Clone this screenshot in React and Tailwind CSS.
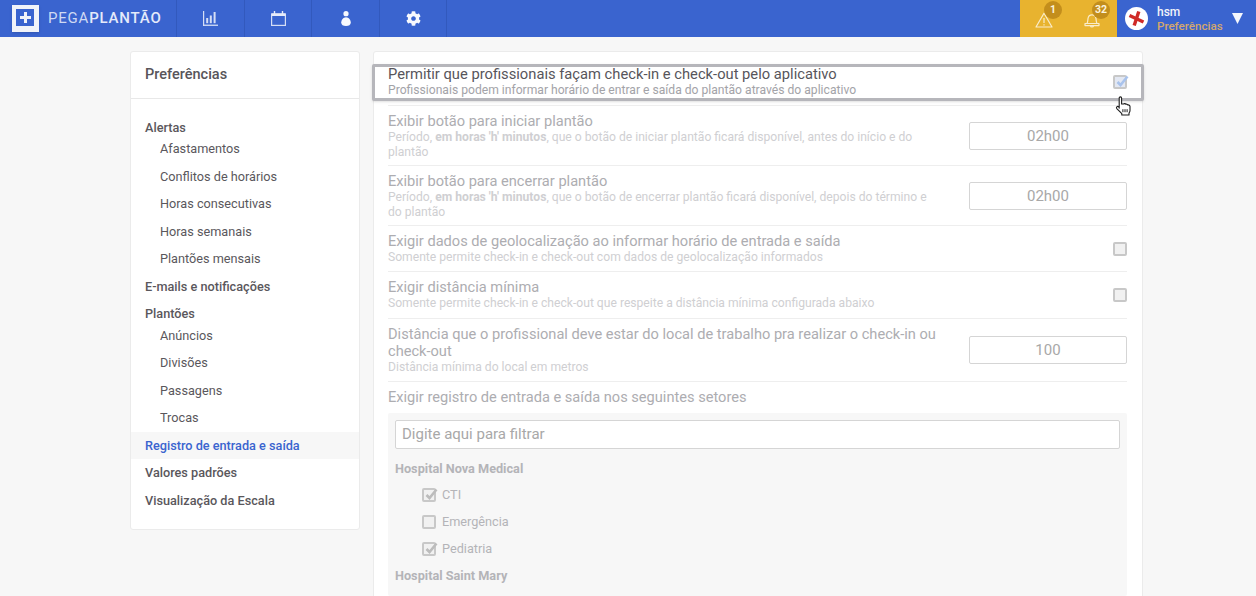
import React from "react";
import { FaCog } from "react-icons/fa";

const menu = [
  { label: "Alertas", children: ["Afastamentos", "Conflitos de horários", "Horas consecutivas", "Horas semanais", "Plantões mensais"] },
  { label: "E-mails e notificações" },
  { label: "Plantões", children: ["Anúncios", "Divisões", "Passagens", "Trocas"] },
  { label: "Registro de entrada e saída", active: true },
  { label: "Valores padrões" },
  { label: "Visualização da Escala" },
];

const ChartIcon = () => (
  <svg width="15" height="15" viewBox="0 0 15 15" fill="#d5def5">
    <rect x="0" y="0" width="1.2" height="15" />
    <rect x="0" y="13.6" width="15" height="1.3" />
    <rect x="3.2" y="7" width="2" height="5.2" />
    <rect x="6.8" y="4.5" width="2" height="7.7" />
    <rect x="10.6" y="1" width="2" height="11.2" />
  </svg>
);

const CalendarIcon = () => (
  <svg width="15" height="15" viewBox="0 0 15 15" fill="none" stroke="#d5def5">
    <rect x="0.6" y="3" width="13.8" height="11.4" strokeWidth="1.2" />
    <rect x="0.6" y="2.4" width="13.8" height="2.6" fill="#e6ebf9" stroke="none" />
    <rect x="2.8" y="0" width="1.4" height="3" fill="#e6ebf9" stroke="none" />
    <rect x="10.8" y="0" width="1.4" height="3" fill="#e6ebf9" stroke="none" />
  </svg>
);

const PersonIcon = () => (
  <svg width="10" height="15" viewBox="0 0 10 15" fill="#f7f9fe">
    <circle cx="5" cy="2.7" r="2.6" />
    <path d="M5 6.2C7.8 6.2 9.8 9 9.8 11.6C9.8 14.1 7.8 15 5 15C2.2 15 0.2 14.1 0.2 11.6C0.2 9 2.2 6.2 5 6.2Z" />
  </svg>
);

const AlertIcon = () => (
  <svg width="18" height="16" viewBox="0 0 18 16" fill="none" stroke="#f9eccb" strokeWidth="1.2">
    <path d="M9 1.2L17 15H1Z" strokeLinejoin="round" />
    <path d="M9 6V11M9 12.2V13.6" />
  </svg>
);

const BellIcon = () => (
  <svg width="16" height="16" viewBox="0 0 16 16" fill="none" stroke="#f9eccb" strokeWidth="1.2">
    <path d="M3 11.5C3.8 10 3.8 8.5 4 6.5C4.3 4 6 2.8 8 2.8C10 2.8 11.7 4 12 6.5C12.2 8.5 12.2 10 13 11.5Z" strokeLinejoin="round" />
    <path d="M1 11.5H15V13.6H1Z" strokeLinejoin="round" />
    <path d="M6.5 13.8C6.8 15.3 9.2 15.3 9.5 13.8" />
  </svg>
);

const HandCursor = () => (
  <svg className="absolute left-[1115px] top-[96px]" width="16" height="20" viewBox="0 0 16 20" fill="#ffffff" stroke="#1c1c1c" strokeWidth="1.1" strokeLinejoin="round">
    <path d="M4.2 12.2L4.2 2.2C4.2 0.4 6.6 0.4 6.6 2.2V8L8.6 8C9.2 7.4 10.4 7.5 10.8 8.3C11.5 7.9 12.5 8.2 12.8 9C13.8 8.7 15 9.3 15 10.6V14.5C15 15.6 14.5 16.3 14 17.2V19H6.8V17.6C5.6 16.4 4 14.6 2 12.8C0.6 11.4 2.3 9.6 3.8 10.8Z" />
    <path d="M7.9 13.2V16.2M10 13.2V16.2M12.1 13.2V16.2" fill="none" strokeWidth="1" />
  </svg>
);

const Check = ({ color }) => (
  <svg className="absolute left-[0px] top-[-3px]" width="15" height="15" viewBox="0 0 15 15" fill="none" stroke={color} strokeWidth="2.6">
    <path d="M2.5 8L5.5 11L12.5 2.5" />
  </svg>
);

const Checkbox = ({ checked, color = "#b9b9b9", box = "bg-[#f1f1f1]" }) => (
  <div className={`relative w-[14px] h-[14px] rounded-[2px] border-2 border-[#c8c8c8] shrink-0 ${box}`}>
    {checked && <Check color={color} />}
  </div>
);

const ValueInput = ({ value }) => (
  <div className="w-[158px] h-[28px] shrink-0 rounded-[2px] border border-[#d5d5d5] bg-white flex items-center justify-center text-[15px] text-[#a8a8a8]">
    {value}
  </div>
);

const Row = ({ title, sub, children, bottom = "pb-[5.5px]" }) => (
  <div className={`flex items-center justify-between gap-[30px] border-b border-[#eeeeee] pt-[6.5px] ${bottom}`}>
    <div className="min-w-0 flex-1">
      <div className="text-[14.62px] leading-[17px] text-[#adadb1]">{title}</div>
      <div className="text-[12.13px] leading-[15px] text-[#cfcfd2]">{sub}</div>
    </div>
    {children}
  </div>
);

const Setor = ({ label, checked }) => (
  <div className="flex items-center gap-[6px] h-[27px] pl-[27px] text-[12.7px] text-[#b4b4b8]">
    <Checkbox checked={checked} color="#bcbcbc" />
    {label}
  </div>
);

const Badge = ({ children }) => (
  <div className="absolute left-[24px] top-[1px] w-[18px] h-[18px] rounded-full bg-[#c38e1c] text-[#fbf3dd] text-[10.5px] font-bold flex items-center justify-center">
    {children}
  </div>
);

export default function App() {
  return (
    <div className="relative h-[596px] overflow-hidden bg-[#f7f7f7] font-['Roboto',sans-serif]">
      <header className="h-[37px] flex bg-[#3a64cf] text-white">
        <div className="w-[176px] flex items-center pl-[12px]">
          <div className="w-[27px] h-[27px] bg-[#f1f3f9] pl-[4px] pt-[4px] shadow-sm">
            <div className="w-[18px] h-[17px] bg-[#3a64cf] flex items-center justify-center">
              <svg width="11" height="11" viewBox="0 0 11 11" fill="#f1f3f9">
                <rect x="4" y="0" width="3" height="11" />
                <rect x="0" y="4" width="11" height="3" />
              </svg>
            </div>
          </div>
          <span className="ml-[9px] text-[15px] tracking-[0.8px] text-[#cfd9f3]">
            PEGA<span className="font-medium text-[#e4eafa]">PLANTÃO</span>
          </span>
        </div>
        <div className="flex border-l border-[#3259bd]">
          <div className="w-[68px] flex items-center justify-center border-r border-[#3259bd]"><ChartIcon /></div>
          <div className="w-[67px] flex items-center justify-center border-r border-[#3259bd]"><CalendarIcon /></div>
          <div className="w-[68px] flex items-center justify-center border-r border-[#3259bd]"><PersonIcon /></div>
          <div className="w-[67px] flex items-center justify-center border-r border-[#3259bd]"><FaCog size={15} color="#f7f9fe" /></div>
        </div>
        <div className="ml-auto w-[97px] bg-[#e8b32f] flex">
          <div className="relative w-[48px]">
            <div className="absolute left-[15px] top-[12px]"><AlertIcon /></div>
            <Badge>1</Badge>
          </div>
          <div className="relative w-[49px]">
            <div className="absolute left-[16px] top-[12px]"><BellIcon /></div>
            <Badge>32</Badge>
          </div>
        </div>
        <div className="w-[139px] flex items-center pl-[8px]">
          <div className="w-[23px] h-[23px] rounded-full bg-white flex items-center justify-center">
            <svg width="17" height="17" viewBox="0 0 17 17" stroke="#cf2a27" strokeWidth="3.4" fill="none">
              <path d="M1.5 5.5L15.5 12" />
              <path d="M10.8 1.5L6.2 15.5" />
            </svg>
          </div>
          <div className="ml-[9px]">
            <div className="text-[12px] font-medium text-[#f1f3f9] leading-[14px]">hsm</div>
            <div className="text-[11.6px] font-medium text-[#d4a76c] leading-[14px]">Preferências</div>
          </div>
          <svg className="ml-[9px]" width="11" height="11" viewBox="0 0 11 11" fill="#f4f6fc">
            <path d="M0 0H11L5.5 11Z" />
          </svg>
        </div>
      </header>

      <div className="flex items-start gap-[13px] pl-[130px] pt-[14px]">
        <aside className="w-[230px] h-[479px] shrink-0 bg-white border border-[#ebebeb] rounded-[3px]">
          <div className="h-[47px] flex items-center px-[14px] border-b border-[#e8e8e8] text-[14.5px] font-medium text-[#58555a]">
            Preferências
          </div>
          <nav className="pt-[14.5px] text-[12.7px] text-[#5a575c]">
            {menu.map((item) => (
              <div key={item.label}>
                <div className={`h-[27.5px] flex items-center px-[14px] font-medium ${item.active ? "bg-[#f7f7f7] text-[#3a64cf]" : ""} ${item.children ? "mb-[-6px]" : ""}`}>
                  {item.label}
                </div>
                {item.children?.map((child) => (
                  <div key={child} className="h-[27.5px] flex items-center pl-[29px]">{child}</div>
                ))}
              </div>
            ))}
          </nav>
        </aside>

        <main className="w-[770px] h-[560px] shrink-0 bg-white border border-[#ebebeb] rounded-[3px] pl-[14px] pr-[15px] pt-[12px]">
          <div className="ml-[-16px] mr-[-17px] mb-[4px] h-[37px] flex items-center justify-between pl-[13px] pr-[14px] bg-white border-[3px] border-[#b6b6bb] rounded-[2px] shadow-sm">
            <div className="pb-[1px]">
              <div className="text-[14.72px] leading-[15.5px] text-[#57555b]">Permitir que profissionais façam check-in e check-out pelo aplicativo</div>
              <div className="text-[12.13px] leading-[14px] text-[#a3a3a8]">Profissionais podem informar horário de entrar e saída do plantão através do aplicativo</div>
            </div>
            <div className="pb-[2px]">
              <Checkbox checked color="#a9c3ec" box="bg-[#e3e8f3]" />
            </div>
          </div>
          <div className="border-t border-[#eeeeee]">
            <Row title="Exibir botão para iniciar plantão" sub={<>Período, <b className="font-bold">em horas 'h' minutos</b>, que o botão de iniciar plantão ficará disponível, antes do início e do plantão</>}>
              <ValueInput value="02h00" />
            </Row>
            <Row title="Exibir botão para encerrar plantão" sub={<>Período, <b className="font-bold">em horas 'h' minutos</b>, que o botão de encerrar plantão ficará disponível, depois do término e do plantão</>}>
              <ValueInput value="02h00" />
            </Row>
            <Row bottom="pb-[6.5px]" title="Exigir dados de geolocalização ao informar horário de entrada e saída" sub="Somente permite check-in e check-out com dados de geolocalização informados">
              <Checkbox />
            </Row>
            <Row bottom="pb-[7.5px]" title="Exigir distância mínima" sub="Somente permite check-in e check-out que respeite a distância mínima configurada abaixo">
              <Checkbox />
            </Row>
            <Row bottom="pb-[6.5px]" title="Distância que o profissional deve estar do local de trabalho pra realizar o check-in ou check-out" sub="Distância mínima do local em metros">
              <ValueInput value="100" />
            </Row>
          </div>
          <div className="pt-[7px] pb-[8px] text-[14.62px] leading-[16px] text-[#adadb1]">
            Exigir registro de entrada e saída nos seguintes setores
          </div>
          <div className="bg-[#f7f7f7] p-[7px] rounded-[2px]">
            <div className="h-[29px] flex items-center px-[6px] bg-white border border-[#d5d5d5] rounded-[2px] text-[15px] text-[#a8a8a8]">
              Digite aqui para filtrar
            </div>
            <div className="h-[32px] pt-[8px] flex items-center text-[12.7px] font-bold text-[#b4b4b8]">Hospital Nova Medical</div>
            <Setor label="CTI" checked />
            <Setor label="Emergência" />
            <Setor label="Pediatria" checked />
            <div className="h-[27px] flex items-center text-[12.7px] font-bold text-[#b4b4b8]">Hospital Saint Mary</div>
          </div>
        </main>
      </div>

      <HandCursor />
    </div>
  );
}
